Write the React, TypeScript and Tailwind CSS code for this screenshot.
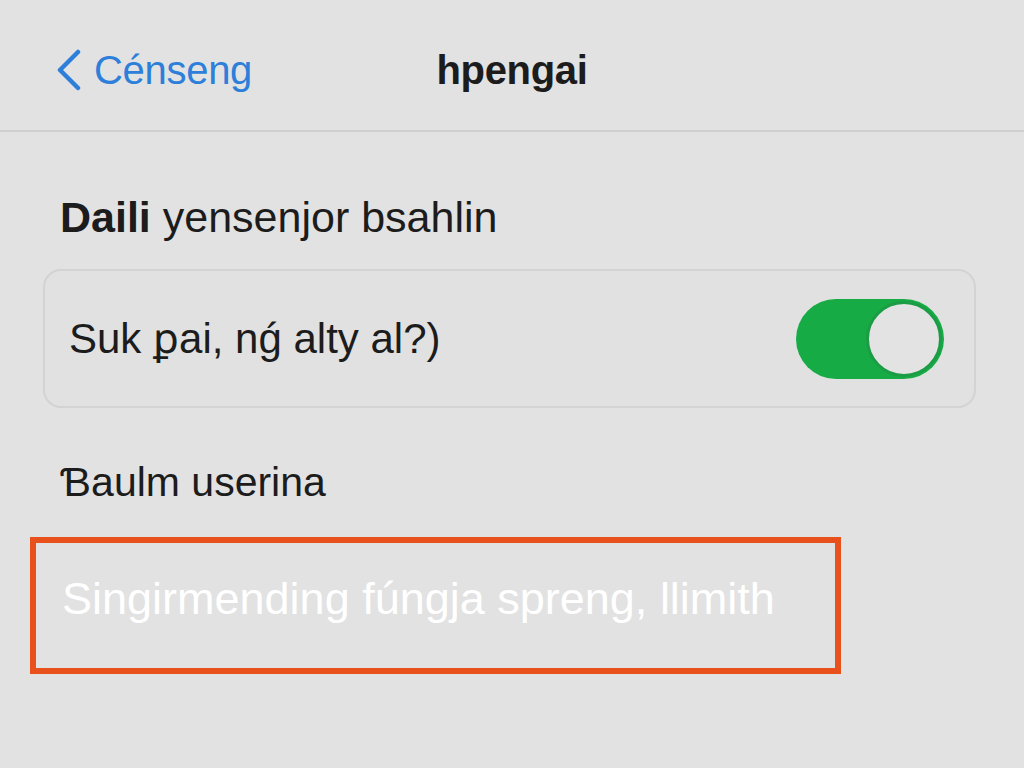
import { useState } from "react";

export default function App() {
  const [enabled, setEnabled] = useState(true);

  return (
    <div
      className="w-[1024px] h-[768px] overflow-hidden bg-[#e2e2e2] text-[#1c1c1c]"
      style={{ fontFamily: '"Liberation Sans", Arial, sans-serif' }}
    >
      {/* Nav bar */}
      <header className="h-[132px] border-b-2 border-[#cfcfcf] grid grid-cols-[1fr_auto_1fr] items-center pt-[10px]">
        <button className="flex items-center gap-[12px] pl-[54px] text-[#2d7fd9] text-[40px] tracking-[-0.3px]">
          <svg width="28" height="42" viewBox="0 0 28 42" fill="none">
            <path
              d="M24 3 L6 21 L24 39"
              stroke="currentColor"
              strokeWidth="4.5"
              strokeLinecap="round"
              strokeLinejoin="round"
            />
          </svg>
          <span>Cénseng</span>
        </button>
        <h1 className="text-[40px] font-semibold tracking-[-0.3px]">hpengai</h1>
        <div />
      </header>

      <main className="pt-[64px]">
        {/* Section 1 */}
        <p className="pl-[60px] text-[43px] leading-none">
          <span className="font-bold">Daili</span> yensenjor bsahlin
        </p>

        <div className="mt-[30px] ml-[43px] w-[933px] h-[139px] rounded-[18px] border-2 border-[#d3d3d3] bg-[#e1e1e1] flex items-center justify-between pl-[24px] pr-[30px]">
          <span className="text-[42px]">Suk ꝑai, nǵ alty al?)</span>
          <button
            onClick={() => setEnabled(!enabled)}
            className={`w-[148px] h-[80px] rounded-full p-[2px] flex items-center ${
              enabled ? "bg-[#17ab45] justify-end" : "bg-[#cfcfcf] justify-start"
            }`}
          >
            <span className="w-[76px] h-[76px] rounded-full bg-[#e3e3e3] border-[3px] border-[#1b9c45]" />
          </button>
        </div>

        {/* Section 2 */}
        <p className="mt-[54px] pl-[60px] text-[41px] leading-none">Ɓaulm userina</p>

        <div className="mt-[34px] ml-[30px] w-[811px] h-[137px] border-[6px] border-[#e8501c] flex items-center pl-[26px] pb-[14px]">
          <span className="text-[45px] text-white">Singirmending fúngja spreng, llimith</span>
        </div>
      </main>
    </div>
  );
}
